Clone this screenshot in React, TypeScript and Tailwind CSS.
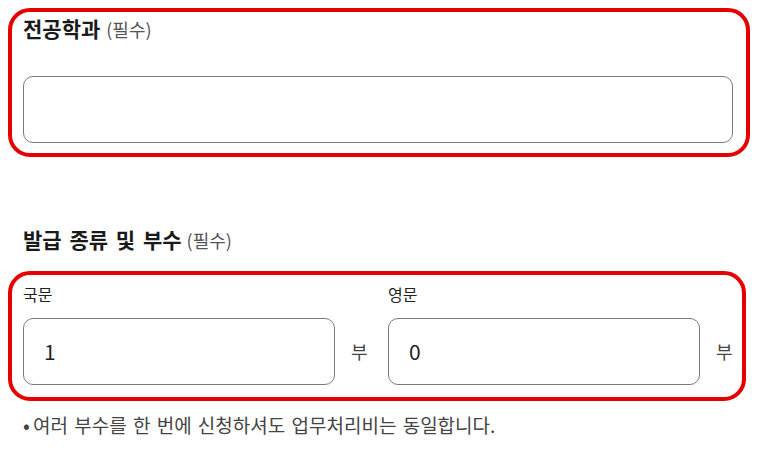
import React from "react";

const font = { fontFamily: '"Noto Sans CJK KR", "Noto Sans", sans-serif' };

function CountField({ label, value }: { label: string; value: string }) {
  return (
    <div className="flex-1 flex flex-col">
      <div className="h-[22px] leading-[22px] text-[16px] text-[#222]">{label}</div>
      <div className="mt-[13px] flex items-center">
        <div className="flex-1 h-[67px] rounded-[10px] border border-[#7a7a7a] bg-white flex items-center pl-[20px] text-[21px] text-[#222]">
          {value}
        </div>
        <span className="ml-[16px] w-[17px] text-[18px] text-[#444]">부</span>
      </div>
    </div>
  );
}

export default function App() {
  return (
    <div className="w-[758px] h-[466px] bg-white px-2 pt-2" style={font}>
      <div className="w-[742px] h-[149px] border-4 border-[#e60000] rounded-[22px] pt-[2px] pl-[11px] pr-[13px]">
        <div className="h-[28px] leading-[28px] flex items-baseline">
          <span className="text-[21px] font-bold text-[#1a1a1a]">전공학과</span>
          <span className="ml-[6px] text-[18px] text-[#555]">(필수)</span>
        </div>
        <div className="mt-[34px] h-[67px] rounded-[10px] border border-[#7a7a7a] bg-white" />
      </div>

      <div className="mt-[68px] ml-[15px] h-[28px] leading-[28px] flex items-baseline">
        <span className="text-[21px] font-bold text-[#1a1a1a] [word-spacing:3px]">발급 종류 및 부수</span>
        <span className="ml-[5px] text-[18px] text-[#555]">(필수)</span>
      </div>

      <div className="mt-[18px] w-[738px] h-[130px] border-4 border-[#e60000] rounded-[22px] pt-[8px] pl-[11px] pr-[9px] flex gap-[20px]">
        <CountField label="국문" value="1" />
        <CountField label="영문" value="0" />
      </div>

      <div className="mt-[10px] ml-[15px] flex items-center text-[19px] text-[#444] leading-[28px]">
        <span className="w-[10px] text-[20px] leading-[28px]">•</span>
        <span className="[word-spacing:2px]">여러 부수를 한 번에 신청하셔도 업무처리비는 동일합니다.</span>
      </div>
    </div>
  );
}
